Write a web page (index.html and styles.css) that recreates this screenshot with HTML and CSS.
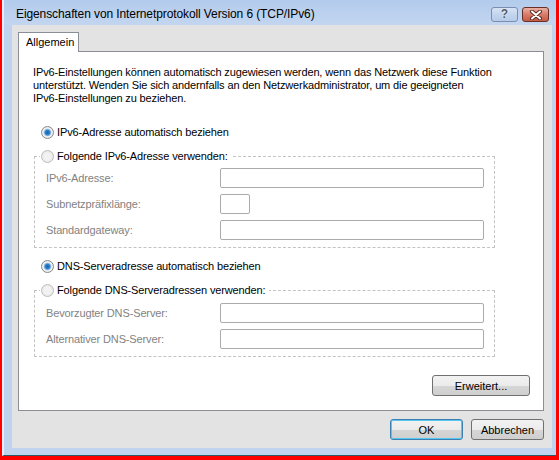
FILE: index.html
```html
<!DOCTYPE html>
<html lang="de">
<head>
<meta charset="utf-8">
<title>Eigenschaften von Internetprotokoll Version 6 (TCP/IPv6)</title>
<link rel="stylesheet" href="styles.css">
</head>
<body>
<div class="screen">
  <div class="window">
    <div class="titlebar">
      <span class="title">Eigenschaften von Internetprotokoll Version 6 (TCP/IPv6)</span>
      <div class="caption-btns">
        <button class="cap help" type="button">?</button>
        <button class="cap close" type="button" aria-label="Schließen">
          <svg width="16" height="10" viewBox="0 0 16 10">
            <path d="M4 1.5 L12 8.5 M12 1.5 L4 8.5" stroke="#5a2a22" stroke-width="4" stroke-linecap="round"/>
            <path d="M4 1.5 L12 8.5 M12 1.5 L4 8.5" stroke="#ffffff" stroke-width="2" stroke-linecap="round"/>
          </svg>
        </button>
      </div>
    </div>
    <div class="frame">
      <div class="client">
        <div class="tabs"><div class="tab">Allgemein</div></div>
        <div class="panel">
          <p class="desc">IPv6-Einstellungen können automatisch zugewiesen werden, wenn das Netzwerk diese Funktion<br>unterstützt. Wenden Sie sich andernfalls an den Netzwerkadministrator, um die geeigneten<br>IPv6-Einstellungen zu beziehen.</p>

          <label class="opt top-opt"><input type="radio" name="ip" checked><span>IPv6-Adresse automatisch beziehen</span></label>
          <fieldset class="group group-ip">
            <legend><label class="opt"><input type="radio" name="ip" disabled><span>Folgende IPv6-Adresse verwenden:</span></label></legend>
            <div class="fields">
              <div class="field"><span class="lbl">IPv6-Adresse:</span><input class="box wide" type="text" disabled></div>
              <div class="field"><span class="lbl">Subnetzpräfixlänge:</span><input class="box short" type="text" disabled></div>
              <div class="field"><span class="lbl">Standardgateway:</span><input class="box wide" type="text" disabled></div>
            </div>
          </fieldset>

          <label class="opt dns-opt"><input type="radio" name="dns" checked><span>DNS-Serveradresse automatisch beziehen</span></label>
          <fieldset class="group group-dns">
            <legend><label class="opt"><input type="radio" name="dns" disabled><span>Folgende DNS-Serveradressen verwenden:</span></label></legend>
            <div class="fields">
              <div class="field"><span class="lbl">Bevorzugter DNS-Server:</span><input class="box wide" type="text" disabled></div>
              <div class="field"><span class="lbl">Alternativer DNS-Server:</span><input class="box wide" type="text" disabled></div>
            </div>
          </fieldset>

          <div class="adv-row"><button class="btn adv" type="button">Erweitert...</button></div>
        </div>
        <div class="actions">
          <button class="btn default" type="button">OK</button>
          <button class="btn" type="button">Abbrechen</button>
        </div>
      </div>
    </div>
  </div>
</div>
</body>
</html>
```
FILE: styles.css
```css
html, body {
  margin: 0;
  padding: 0;
  background: #ffffff;
}

body {
  font-family: "Liberation Sans", Arial, sans-serif;
  font-size: 11px;
  color: #000000;
}

.screen {
  width: 559px;
  height: 460px;
  box-sizing: border-box;
  border-left: 2px solid #ff0000;
  border-right: 3px solid #ff0000;
  border-bottom: 4px solid #ff0000;
}

.window {
  height: 456px;
  box-sizing: border-box;
  background: #bfd2ee;
  border-left: 2px solid #e9eef6;
  border-bottom: 1px solid #2c5866;
  display: flex;
  flex-direction: column;
}

/* title bar */
.titlebar {
  height: 25px;
  flex: none;
  display: flex;
  justify-content: space-between;
  align-items: flex-start;
  padding: 0 7px 0 12px;
  background: linear-gradient(#b3cbec, #c3d6f0);
}

.title {
  font-size: 12px;
  line-height: 15px;
  padding-top: 7px;
  letter-spacing: -0.1px;
  color: #000000;
  white-space: nowrap;
}

.caption-btns {
  display: flex;
  gap: 4px;
  padding-top: 7px;
}

.cap {
  width: 27px;
  height: 15px;
  box-sizing: border-box;
  padding: 0;
  margin: 0;
  border-radius: 3px;
  display: flex;
  align-items: center;
  justify-content: center;
  font-family: "Liberation Sans", Arial, sans-serif;
}

.help {
  border: 1px solid #7b8db3;
  background: linear-gradient(#d6e3f5, #c3d5ee 50%, #b7cbe9);
  font-size: 12px;
  font-weight: bold;
  line-height: 13px;
  color: #505a66;
  text-shadow: 0 0 1px #ffffff, 0 0 1px #ffffff;
}

.close {
  border: 1px solid #6a2e25;
  background: linear-gradient(#eab0a4, #d77c6a 50%, #c65a46);
}

.close svg {
  display: block;
}

/* client area */
.frame {
  flex: 1;
  padding: 0 4px 7px 8px;
  display: flex;
}

.client {
  flex: 1;
  background: #e3e3e3;
  padding: 7px 8px 0 6px;
  display: flex;
  flex-direction: column;
}

.tabs {
  display: flex;
  position: relative;
  z-index: 1;
  margin-bottom: -1px;
}

.tab {
  width: 61px;
  height: 20px;
  box-sizing: border-box;
  border: 1px solid #8b8e96;
  border-bottom: none;
  background: #ffffff;
  padding: 3px 0 0 7px;
  line-height: 13px;
}

.panel {
  height: 360px;
  box-sizing: border-box;
  border: 1px solid #8b8e96;
  background: #ffffff;
  padding: 14px 13px 0 14px;
  display: flex;
  flex-direction: column;
  align-items: flex-start;
  letter-spacing: -0.13px;
}

.desc {
  margin: 0;
  line-height: 13px;
  white-space: nowrap;
}

.opt {
  display: flex;
  align-items: center;
  height: 13px;
  line-height: 13px;
  white-space: nowrap;
}

.opt input {
  appearance: none;
  -webkit-appearance: none;
  width: 13px;
  height: 13px;
  margin: 0 3px 0 0;
  box-sizing: border-box;
  border-radius: 50%;
  border: 1px solid #8a8a8a;
  background: radial-gradient(circle, #1d5fa8 0, #2f7fcc 2.2px, #7fb6e6 3.2px, #f2f2f2 4.2px, #dcdcdc 100%);
  flex: none;
}

.opt input:disabled {
  border-color: #bdbdbd;
  background: radial-gradient(circle, #f2f2f2 0, #f2f2f2 3px, #e2e2e2 100%);
}

.top-opt {
  margin: 21px 0 0 8px;
}

.dns-opt {
  margin: 12px 0 0 8px;
}

.group {
  width: 461px;
  box-sizing: border-box;
  margin: 11px 0 0 1px;
  border: 1px dashed #c3c3c3;
  padding: 5px 10px 7px 5px;
  min-width: 0;
}

.group-dns {
  padding-top: 6px;
}

.group legend {
  padding: 0 4px 0 1px;
  margin: 0;
}

.fields {
  display: flex;
  flex-direction: column;
  gap: 6px;
  padding-left: 6px;
}

.field {
  display: flex;
  align-items: center;
  height: 20px;
}

.lbl {
  width: 174px;
  flex: none;
  color: #828282;
  white-space: nowrap;
}

.box {
  appearance: none;
  -webkit-appearance: none;
  height: 20px;
  box-sizing: border-box;
  margin: 0;
  padding: 0;
  border: 1px solid #ababab;
  border-radius: 2px;
  background: #ffffff;
}

.box.wide {
  width: 264px;
}

.box.short {
  width: 30px;
}

.adv-row {
  align-self: stretch;
  display: flex;
  justify-content: flex-end;
  margin-top: 18px;
}

.btn {
  height: 21px;
  box-sizing: border-box;
  margin: 0;
  padding: 0;
  border: 1px solid #707070;
  border-radius: 3px;
  background: linear-gradient(#f2f2f2, #ebebeb 50%, #d6d6d6 51%, #cfcfcf);
  font-family: "Liberation Sans", Arial, sans-serif;
  font-size: 11px;
  color: #000000;
  width: 73px;
}

.btn.adv {
  width: 98px;
}

.btn.default {
  border-color: #3c7fb1;
  box-shadow: inset 0 0 0 1px #56c7f2;
}

.actions {
  display: flex;
  justify-content: flex-end;
  gap: 8px;
  margin-top: 8px;
}
```
